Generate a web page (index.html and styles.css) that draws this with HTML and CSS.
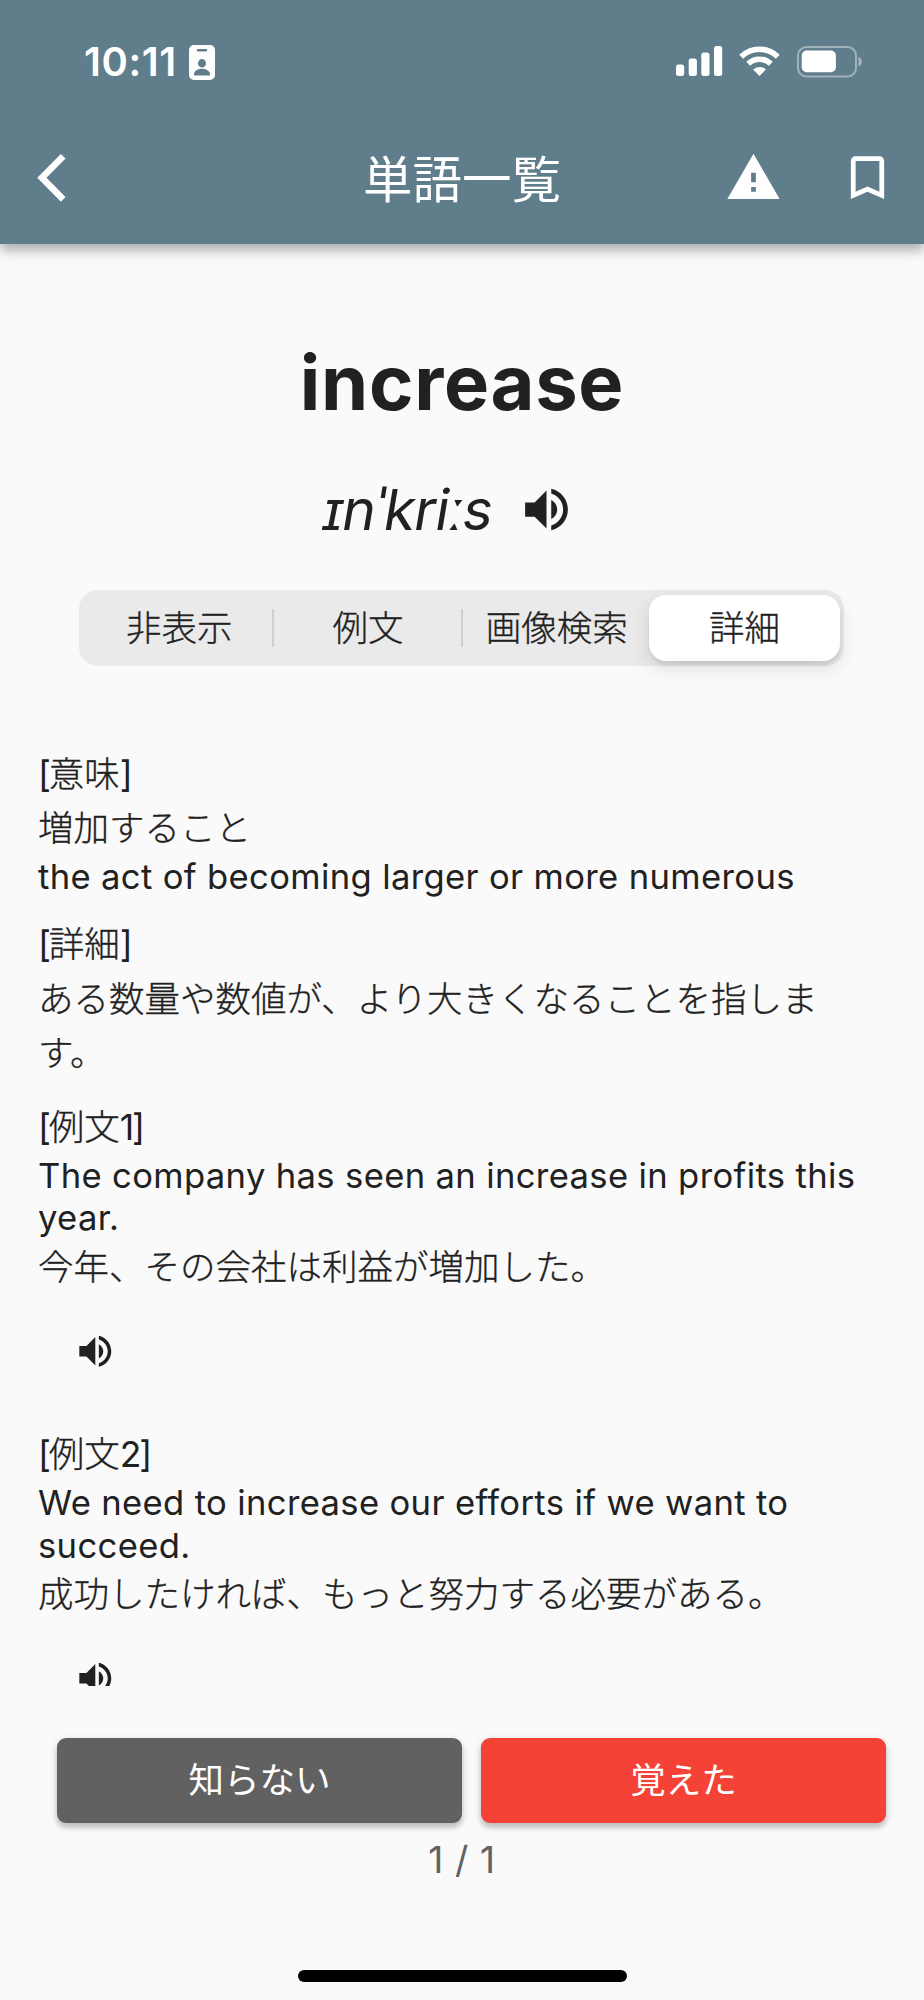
FILE: index.html
```html
<!DOCTYPE html>
<html lang="ja">
<head>
    <meta charset="UTF-8">
    <meta name="viewport" content="width=device-width, initial-scale=1.0">
    <title>単語一覧</title>
    <link rel="stylesheet" href="styles.css">
</head>
<body>
    <header class="app-header">
        <div class="status-bar">
            <span class="clock">10:11</span>
            <svg class="badge-icon" width="26" height="35" viewBox="0 0 26 35">
                <path fill="#fff" fill-rule="evenodd" d="M5 0h16a5 5 0 0 1 5 5v25a5 5 0 0 1-5 5H5a5 5 0 0 1-5-5V5a5 5 0 0 1 5-5zM9 4a1.2 1.2 0 0 0 0 2.4h8A1.2 1.2 0 0 0 17 4zM13 14a4 4.3 0 1 0 0 8.6a4 4.3 0 1 0 0-8.6zM5.5 30.5h15c1.5 0 .5-6.7-7.5-6.7s-9 6.700-7.5 6.7z"/>
            </svg>
            <div class="status-icons">
                <svg width="47" height="30" viewBox="0 0 47 30" fill="#fff">
                    <rect x="0" y="18.5" width="8.2" height="11.5" rx="2.5"/>
                    <rect x="12.7" y="12.5" width="8.2" height="17.5" rx="2.5"/>
                    <rect x="25.3" y="6.5" width="8.2" height="23.5" rx="2.5"/>
                    <rect x="38" y="0" width="8.2" height="30" rx="2.5"/>
                </svg>
                <svg class="wifi" width="41" height="30" viewBox="0 0 41 30">
                    <path fill="none" stroke="#fff" stroke-width="5.6" d="M2.2 10.8a26 26 0 0 1 36.600 0M9.2 17.8a16.3 16.3 0 0 1 22.6 0"/>
                    <path fill="#fff" d="M20.5 30l-6.4-6.4a9.3 9.3 0 0 1 12.8 0z"/>
                </svg>
                <svg class="battery" width="66" height="32" viewBox="0 0 66 32">
                    <rect x="1" y="1" width="58" height="29.5" rx="8.5" fill="none" stroke="#fff" stroke-opacity=".4" stroke-width="2"/>
                    <rect x="4.7" y="4.6" width="34.2" height="21.6" rx="5" fill="#fff"/>
                    <path d="M61.5 10.8c4.3 1.8 4.3 8.2 0 10z" fill="#fff" fill-opacity=".45"/>
                </svg>
            </div>
        </div>
        <div class="nav-bar">
            <svg class="back" width="30" height="50" viewBox="0 0 30 50">
                <path d="M26.2 3.2L4.9 24.8l21.3 21.6" fill="none" stroke="#fff" stroke-width="6.6"/>
            </svg>
            <h1 class="title">単語一覧</h1>
            <div class="nav-actions">
                <svg width="57" height="57" viewBox="0 0 24 24" fill="#fff"><path d="M1 21h22L12 2 1 21zm12-3h-2v-2h2v2zm0-4h-2v-4h2v4z"/></svg>
                <svg width="57" height="57" viewBox="0 0 24 24" fill="#fff"><path d="M17 3H7c-1.1 0-2 .9-2 2v16l7-3 7 3V5c0-1.1-.9-2-2-2zm0 15l-5-2.18L7 18V5h10v13z"/></svg>
            </div>
        </div>
    </header>

    <main>
        <h2 class="word">increase</h2>
        <div class="pronunciation">
            <span class="phonetic">ɪnˈkriːs</span>
            <svg class="speaker" width="57" height="57" viewBox="0 0 24 24"><use href="#volume"/></svg>
        </div>

        <div class="segments">
            <div class="segment">非表示</div>
            <div class="segment">例文</div>
            <div class="segment">画像検索</div>
            <div class="segment selected">詳細</div>
        </div>

        <div class="details">
            <section>
                <p><span class="latin">[</span>意味<span class="latin">]</span></p>
                <p>増加すること</p>
                <p class="en">the act of becoming larger or more numerous</p>
            </section>
            <section>
                <p><span class="latin">[</span>詳細<span class="latin">]</span></p>
                <p>ある数量や数値が、より大きくなることを指します。</p>
            </section>
            <section>
                <p><span class="latin">[</span>例文<span class="latin">1]</span></p>
                <p class="en">The company has seen an increase in profits this<br>year.</p>
                <p>今年、その会社は利益が増加した。</p>
                <div class="play">
                    <svg width="42.6" height="42.6" viewBox="0 0 24 24"><use href="#volume"/></svg>
                </div>
            </section>
            <section>
                <p><span class="latin">[</span>例文<span class="latin">2]</span></p>
                <p class="en">We need to increase our efforts if we want to<br>succeed.</p>
                <p>成功したければ、もっと努力する必要がある。</p>
                <div class="play">
                    <svg width="42.6" height="42.6" viewBox="0 0 24 24"><use href="#volume"/></svg>
                </div>
            </section>
        </div>
    </main>

    <footer>
        <div class="buttons">
            <button class="btn unknown">知らない</button>
            <button class="btn known">覚えた</button>
        </div>
        <div class="pager">1 / 1</div>
        <div class="home-indicator"></div>
    </footer>

    <svg width="0" height="0" class="defs">
        <symbol id="volume" viewBox="0 0 24 24">
            <path fill="#212121" d="M3 9v6h4l5 5V4L7 9H3zm13.5 3c0-1.77-1.02-3.29-2.5-4.03v8.05c1.48-.73 2.5-2.25 2.5-4.02zM14 3.23v2.06c2.89.86 5 3.54 5 6.71s-2.11 5.85-5 6.71v2.06c4.01-.91 7-4.49 7-8.77s-2.99-7.86-7-8.77z"/>
        </symbol>
    </svg>
</body>
</html>
```
FILE: styles.css
```css
* {
    box-sizing: border-box;
    margin: 0;
    padding: 0;
}

body {
    width: 924px;
    height: 2000px;
    display: flex;
    flex-direction: column;
    overflow: hidden;
    background-color: #fafafa;
    color: #212121;
    font-family: Inter, "Noto Sans CJK JP", sans-serif;
    font-size: 35.5px;
}

svg {
    display: block;
    flex-shrink: 0;
}

.defs {
    position: absolute;
}

/* Header */
.app-header {
    height: 244px;
    flex-shrink: 0;
    background-color: #607d8b;
    color: #fff;
    box-shadow: 0 5px 9px rgba(0, 0, 0, 0.2), 0 9px 12px rgba(0, 0, 0, 0.12);
}

.status-bar {
    display: flex;
    height: 111px;
    padding: 45px 61px 0 84px;
}

.clock {
    width: 105px;
    font-size: 40px;
    font-weight: 600;
    line-height: 34px;
    letter-spacing: 0.6px;
}

.status-icons {
    display: flex;
    margin-left: auto;
    padding-top: 1px;
}

.wifi {
    margin-left: 16px;
}

.battery {
    margin-left: 17px;
}

.nav-bar {
    display: grid;
    grid-template-columns: 1fr auto 1fr;
    align-items: center;
    height: 133px;
    padding: 0 28px;
}

.back {
    margin: 1px 0 0 9px;
}

.title {
    padding-top: 5px;
    font-size: 49.5px;
    font-weight: 400;
    line-height: 60px;
}

.nav-actions {
    display: flex;
    justify-content: flex-end;
    gap: 57px;
}

/* Word */
main {
    height: 1441.5px;
    overflow: hidden;
}

.word {
    margin-top: 93px;
    font-size: 75.8px;
    font-weight: 700;
    line-height: 92px;
    letter-spacing: 0.7px;
    text-align: center;
}

.pronunciation {
    display: flex;
    align-items: center;
    height: 114px;
    margin-top: 23px;
    padding-left: 323px;
}

.phonetic {
    width: 195px;
    font-size: 56.9px;
    font-style: italic;
    letter-spacing: -1px;
}

/* Segmented control */
.segments {
    display: grid;
    grid-template-columns: repeat(4, 1fr);
    width: 765px;
    height: 76px;
    margin: 24px 0 0 79px;
    padding: 5px 4px 5px 6px;
    border-radius: 19px;
    background-color: #eaeaea;
}

.segment {
    padding-top: 2px;
    font-weight: 300;
    -webkit-text-stroke: 0.3px;
    line-height: 64px;
    text-align: center;
    position: relative;
}

/* Divider, left out next to the selected segment */
.segment:nth-child(-n+2)::after {
    content: "";
    position: absolute;
    right: 0;
    top: 14px;
    width: 2px;
    height: 38px;
    background-color: #d0d0d0;
}

.selected {
    margin-left: -2px;
    border-radius: 17px;
    background-color: #fff;
    box-shadow: 0 7px 19px rgba(0, 0, 0, 0.12), 0 4px 3px rgba(0, 0, 0, 0.06);
}

/* Details */
.details {
    padding: 81.5px 38px 0;
}

.details section {
    display: flow-root;
    margin-bottom: 19px;
}

.details p {
    width: 820px;
    font-weight: 300;
    -webkit-text-stroke: 0.3px;
    line-height: 54.6px;
}

.details .en {
    margin: -2px 0 2px;
    font-size: 34.6px;
    font-weight: 400;
    -webkit-text-stroke: 0;
    line-height: 42.6px;
    letter-spacing: 0.36px;
    white-space: nowrap;
}

.latin {
    font-weight: 400;
    -webkit-text-stroke: 0;
    letter-spacing: -2.2px;
}

.play {
    display: flex;
    align-items: center;
    justify-content: center;
    width: 114px;
    height: 114px;
    padding-bottom: 3px;
}

/* Footer */
footer {
    padding-top: 52px;
}

.buttons {
    display: grid;
    grid-template-columns: 1fr 1fr;
    gap: 19px;
    padding: 0 38px 0 57px;
}

.btn {
    height: 85.5px;
    padding-bottom: 5px;
    border: none;
    border-radius: 9px;
    color: #fff;
    font-family: inherit;
    font-size: 35.5px;
    box-shadow: 0 5px 5px rgba(0, 0, 0, 0.16), 0 2px 9px rgba(0, 0, 0, 0.14);
}

.unknown {
    background-color: #616161;
}

.known {
    background-color: #f44336;
}

.pager {
    margin-top: 14px;
    color: #616161;
    font-size: 37px;
    line-height: 46px;
    letter-spacing: 0.7px;
    text-align: center;
}

.home-indicator {
    width: 329px;
    height: 12px;
    margin: 87px auto 0;
    border-radius: 6px;
    background-color: #000;
}
```
